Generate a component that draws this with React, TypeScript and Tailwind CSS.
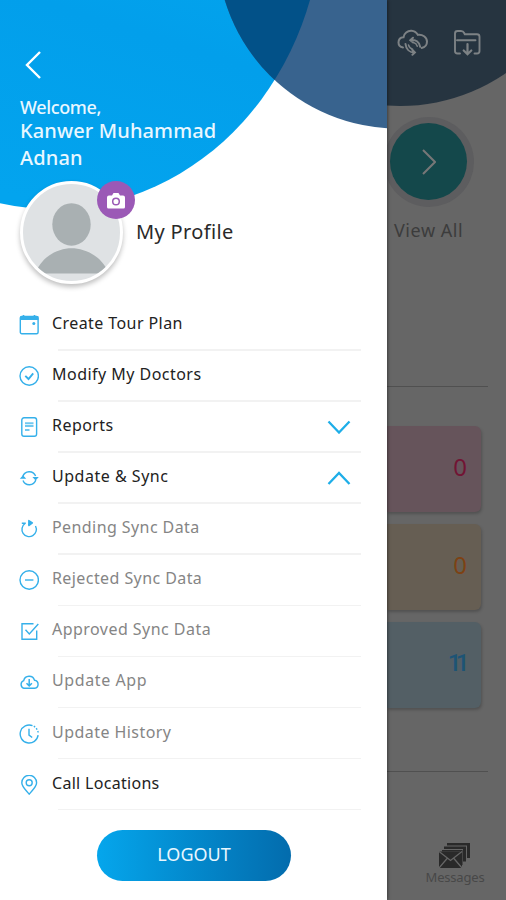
import type { ReactNode } from 'react'

type MenuItem = {
  label: string
  icon: ReactNode
  labelClass: string
  sub?: boolean
  chevron?: 'up' | 'down'
}

type IconProps = {
  children: ReactNode
}

function Icon({ children }: IconProps) {
  return (
    <svg
      viewBox="0 0 20 20"
      className="size-5 shrink-0"
      fill="none"
      stroke="#35b0ea"
      strokeWidth="1.4"
    >
      {children}
    </svg>
  )
}

const items: MenuItem[] = [
  {
    label: 'Create Tour Plan',
    labelClass: 'tracking-[0.42px]',
    icon: (
      <Icon>
        <rect x="1.3" y="1.5" width="17.8" height="17.3" rx="1.5" />
        <path d="M1 3.2h18.4" strokeWidth="3.6" />
        <path d="M4.5 0v2M15.5 0v2" strokeWidth="1.6" />
        <circle cx="14.8" cy="8.5" r="1.5" fill="#35b0ea" stroke="none" />
      </Icon>
    ),
  },
  {
    label: 'Modify My Doctors',
    labelClass: 'tracking-[0.47px]',
    icon: (
      <Icon>
        <circle cx="10.2" cy="10" r="9.2" />
        <path d="m6.3 9.8 3.2 3.2 4.7-5.7" strokeWidth="1.9" />
      </Icon>
    ),
  },
  {
    label: 'Reports',
    labelClass: 'tracking-[0.45px]',
    chevron: 'down',
    icon: (
      <Icon>
        <rect x="2.8" y="0.8" width="14.8" height="18.4" rx="2.2" />
        <path d="M6 6.3h8.500M6 9h8.500M6 13h4.500" strokeWidth="2" opacity="0.7" />
      </Icon>
    ),
  },
  {
    label: 'Update & Sync',
    labelClass: 'tracking-[0.52px]',
    chevron: 'up',
    icon: (
      <Icon>
        <path d="M3.8 8.5a6.8 6.8 0 0 1 12.8-.5M16.8 12a6.8 6.8 0 0 1-12.8.5" />
        <path d="M.8 10.8h6.400l-3.200-3.600zM13.400 9h6.400l-3.200 3.600z" fill="#35b0ea" stroke="none" />
      </Icon>
    ),
  },
  {
    label: 'Pending Sync Data',
    labelClass: 'tracking-[0.42px]',
    sub: true,
    icon: (
      <Icon>
        <path d="M6 4.5a7.200 7.200 0 1 0 10.500 2.500M2.800 4.300h4" />
        <path
          d="m9.800 1.500 3.600 2.400-3.600 2.700z"
          fill="#35b0ea"
          strokeLinejoin="round"
        />
      </Icon>
    ),
  },
  {
    label: 'Rejected Sync Data',
    labelClass: 'tracking-[0.42px]',
    sub: true,
    icon: (
      <Icon>
        <circle cx="10.2" cy="10" r="9.2" />
        <path d="M6 10h8.400" />
      </Icon>
    ),
  },
  {
    label: 'Approved Sync Data',
    labelClass: 'tracking-[0.46px]',
    sub: true,
    icon: (
      <Icon>
        <path d="M14.500 2.800H3v15.500h14.700V9.500" />
        <path d="m6.500 8.800 3.800 4.200 9-10" />
      </Icon>
    ),
  },
  {
    label: 'Update App',
    labelClass: 'tracking-[0.6px]',
    sub: true,
    icon: (
      <Icon>
        <path d="M5 16.300a4 4 0 0 1-.3-7.600 5.600 5.600 0 0 1 10.800-.5 4.100 4.100 0 0 1 .2 8.100z" />
        <path d="M10.200 7v6M7.500 11.200l2.700 2.700 2.700-2.700" strokeWidth="1.5" />
      </Icon>
    ),
  },
  {
    label: 'Update History',
    labelClass: 'tracking-[0.45px]',
    sub: true,
    icon: (
      <Icon>
        <path d="M13.500 1.600a9 9 0 1 0 5.600 9.500" />
        <path d="M14.800 2.200a9 9 0 0 1 4.500 7.800" strokeDasharray="1.6 1.5" />
        <path d="M10 4.800v6.300l3.200 2.400" />
      </Icon>
    ),
  },
  {
    label: 'Call Locations',
    labelClass: 'tracking-[0.3px]',
    icon: (
      <Icon>
        <path d="M10.200 19.200C7 15 2.800 11.700 2.800 7.700a7.400 7.400 0 0 1 14.800 0c0 4-4.200 7.300-7.400 11.500z" />
        <circle cx="10.2" cy="7.7" r="3" />
      </Icon>
    ),
  },
]

function MenuRow({ item }: { item: MenuItem }) {
  const { label, icon, labelClass, sub, chevron } = item
  return (
    <li className="h-[51.1px] flex flex-col">
      <div className="flex-1 flex items-center gap-[13px] pr-[10.5px]">
        <span className="pt-px">{icon}</span>
        <span
          className={`text-base leading-5 pb-[3px] whitespace-nowrap ${labelClass} ${
            sub ? 'text-[#858585]' : 'text-[#222]'
          }`}
        >
          {label}
        </span>
        {chevron && (
          <svg
            viewBox="0 0 24 14"
            className="w-6 h-3.5 ml-auto mt-px"
            fill="none"
            stroke="#1eaee8"
            strokeWidth="2.3"
          >
            {chevron === 'down' ? (
              <path d="m1.500 1.500 10.500 11 10.500-11" />
            ) : (
              <path d="m1.500 13 10.500-11 10.500 11" />
            )}
          </svg>
        )}
      </div>
      <div className="ml-[39px] h-[1.5px] bg-[#f2f2f2]" />
    </li>
  )
}

function Header() {
  return (
    <header className="relative h-[299.5px] pl-5">
      <svg
        viewBox="0 0 387 299"
        className="absolute inset-0 w-[387px] h-[299px]"
      >
        <defs>
          <linearGradient id="sky" x1="0.7" y1="0.3" x2="0.5" y2="1">
            <stop offset="0" stopColor="#03abf0" />
            <stop offset="0.55" stopColor="#029feb" />
            <stop offset="1" stopColor="#03a4ee" />
          </linearGradient>
          <clipPath id="skyClip">
            <ellipse cx="52.5" cy="-90" rx="270" ry="299" />
          </clipPath>
        </defs>
        <ellipse cx="52.5" cy="-90" rx="270" ry="299" fill="url(#sky)" />
        <circle cx="398" cy="-52.5" r="181" fill="#38638e" />
        <circle cx="398" cy="-52.5" r="181" fill="#025188" clipPath="url(#skyClip)" />
      </svg>
      <div className="relative pt-[51px] text-[#e9f7ff]">
        <svg
          viewBox="0 0 18 28"
          className="w-[18px] h-7 ml-[5px]"
          fill="none"
          stroke="#fff"
          strokeWidth="2.4"
        >
          <path d="M15 1 2 14l13 13" />
        </svg>
        <p className="mt-[17px] text-lg leading-[22px] font-medium tracking-[-0.35px]">Welcome,</p>
        <h1 className="text-xl leading-[27px] font-medium tracking-[0.12px] -mt-px">
          Kanwer Muhammad
          <br />
          Adnan
        </h1>
        <div className="flex items-center mt-[10px]">
          <div className="relative">
            <svg
              viewBox="0 0 96 96"
              className="size-[103px] rounded-full border-[3px] border-white bg-[#dfe2e4] shadow-[0_3px_5px_rgba(0,0,0,0.25)]"
            >
              <ellipse cx="48" cy="40" rx="19" ry="21" fill="#a9b0b2" />
              <path d="M12 88.500C19 71 35 63.500 48 63.500s30 7.500 37 25z" fill="#a9b0b2" />
            </svg>
            <div className="absolute top-0 left-[77px] size-[38px] rounded-full bg-[#9b59b6] flex items-center justify-center">
              <svg viewBox="0 0 18 16" className="w-[18px] h-4 mt-0.5">
                <path
                  d="M2 2.500h3L6.500 0h5L13 2.500h3a2 2 0 0 1 2 2V14a1.500 1.500 0 0 1-1.500 1.500h-15A1.500 1.500 0 0 1 0 14V4.500a2 2 0 0 1 2-2z"
                  fill="#fff"
                />
                <circle cx="9" cy="8.5" r="3.3" fill="none" stroke="#9b59b6" strokeWidth="1.5" />
              </svg>
            </div>
          </div>
          <h2 className="ml-[13px] pb-0.5 text-xl text-[#2a2a2a] tracking-[0.35px]">My Profile</h2>
        </div>
      </div>
    </header>
  )
}

function Dashboard() {
  return (
    <main className="relative w-[119px] h-[900px] overflow-hidden bg-[#666]">
      <svg viewBox="387 0 119 110" className="absolute top-0 left-0 w-[119px] h-[110px]">
        <circle cx="400" cy="-81" r="187" fill="#263440" />
      </svg>
      <div className="relative">
        <div className="flex gap-6 pt-[27px] pl-[10px]">
          <svg
            viewBox="0 -1 32 30"
            className="w-8 h-[30px]"
            fill="none"
            stroke="#7d8285"
            strokeWidth="2"
            strokeLinecap="round"
          >
            <path d="M6 19.500C3.500 19 1.500 17.200 1.500 14.500c0-3 2-5 5-5.200C7 5.500 10.500 2.500 14.500 2.800c3 .2 5 1.800 6.300 4 4.500-.8 9.200 2.300 9.200 6.800 0 3.200-2.200 5.800-5.300 6.300" />
            <path d="M13.500 12.300c5-1.500 9 2 9.700 6.500M16 9.800l-2.700 2.500 2.800 2.200M8.500 16c.5 5 4 8.500 9 8.500M15.200 21.700l2.700 2.800-2.500 2.300" />
            <path d="M11.500 17c.7 2.200 2 3.700 4 4.300M16.500 14.500c2 .5 3.200 1.800 3.800 3.700" strokeWidth="1.5" />
          </svg>
          <svg
            viewBox="0 -1 30 30"
            className="size-[30px]"
            fill="none"
            stroke="#7d8285"
            strokeWidth="1.9"
            strokeLinecap="round"
          >
            <path d="M7 25.500H4.500A2.500 2.500 0 0 1 2 23V5.500C2 4 3 3 4.500 3H8c1.500 0 2.500.5 3.200 2l.6 1.300H24A2.500 2.500 0 0 1 26.500 8.800V23A2.500 2.500 0 0 1 24 25.500h-2.500M4 12.300h18.500" />
            <path d="M14.500 16v10M10.700 22.500l3.800 3.700 3.800-3.700" strokeWidth="2.2" />
          </svg>
        </div>
        <div className="ml-[-3.5px] mt-[59.5px] size-[90px] rounded-full bg-[#5d5d5f] flex items-center justify-center">
          <div className="size-[77px] rounded-full bg-[#14484b] flex items-center justify-center">
            <svg viewBox="0 0 14 26" className="w-3.5 h-[26px]" fill="none" stroke="#777" strokeWidth="2">
              <path d="m1 1 12 12L1 25" />
            </svg>
          </div>
        </div>
        <p className="mt-[9px] ml-[7px] text-lg leading-7 text-[#3c3c3c] tracking-[0.55px]">View All</p>
        <div className="mt-[142px] mr-[18px] h-px bg-[#505050]" />
        <div className="mt-[39px] mr-[25px] flex flex-col gap-3 text-right text-2xl">
          <div className="h-[86px] rounded-r-md bg-[#66545b] shadow-[1px_2px_3px_rgba(0,0,0,0.2)] pr-[14px] leading-[82px] text-[#721434]">
            0
          </div>
          <div className="h-[86px] rounded-r-md bg-[#665e53] shadow-[1px_2px_3px_rgba(0,0,0,0.2)] pr-[14px] leading-[82px] text-[#7d4213]">
            0
          </div>
          <div className="h-[86px] rounded-r-md bg-[#535f65] shadow-[1px_2px_3px_rgba(0,0,0,0.2)] pr-[17px] leading-[82px] font-['Roboto',sans-serif] tracking-[-5.5px] font-medium text-[#1d5475]">
            11
          </div>
        </div>
        <div className="mt-[63px] mr-[18px] h-px bg-[#505050]" />
        <div className="mt-[70px] ml-[37px] w-[62px] flex flex-col items-center">
          <svg viewBox="0 0 32 26" className="w-8 h-[26px]">
            <path d="M8 1h23v15h-3V3.500H8zM5 4.500h22v15h-3V7H5zM3 8h20.500v15H21V9.500H3z" fill="#292929" />
            <path d="M0 9.500h23V26H0z" fill="#292929" />
            <path d="m0 9.500 11.500 9L23 9.500M0 26l8.500-10M23 26l-8.500-10" fill="none" stroke="#666" strokeWidth="1.3" />
          </svg>
          <span className="text-[13px] leading-[18px] text-[#484848] tracking-[-0.2px]">Messages</span>
        </div>
      </div>
    </main>
  )
}

export default function App() {
  return (
    <div className="w-[506px] h-[900px] flex overflow-hidden font-['Noto_Sans',sans-serif]">
      <aside className="relative z-10 w-[387px] h-[900px] shrink-0 bg-white shadow-[1px_0_3px_rgba(0,0,0,0.4)]">
        <Header />
        <ul className="pl-[19px] pr-[26px]">
          {items.map((item) => (
            <MenuRow key={item.label} item={item} />
          ))}
        </ul>
        <button className="block mt-[19.5px] ml-[97px] w-[194px] h-[51px] rounded-full bg-linear-to-r from-[#05a6ec] to-[#036cad] text-lg text-[#e9f7ff] pb-0.5">
          LOGOUT
        </button>
      </aside>
      <Dashboard />
    </div>
  )
}
